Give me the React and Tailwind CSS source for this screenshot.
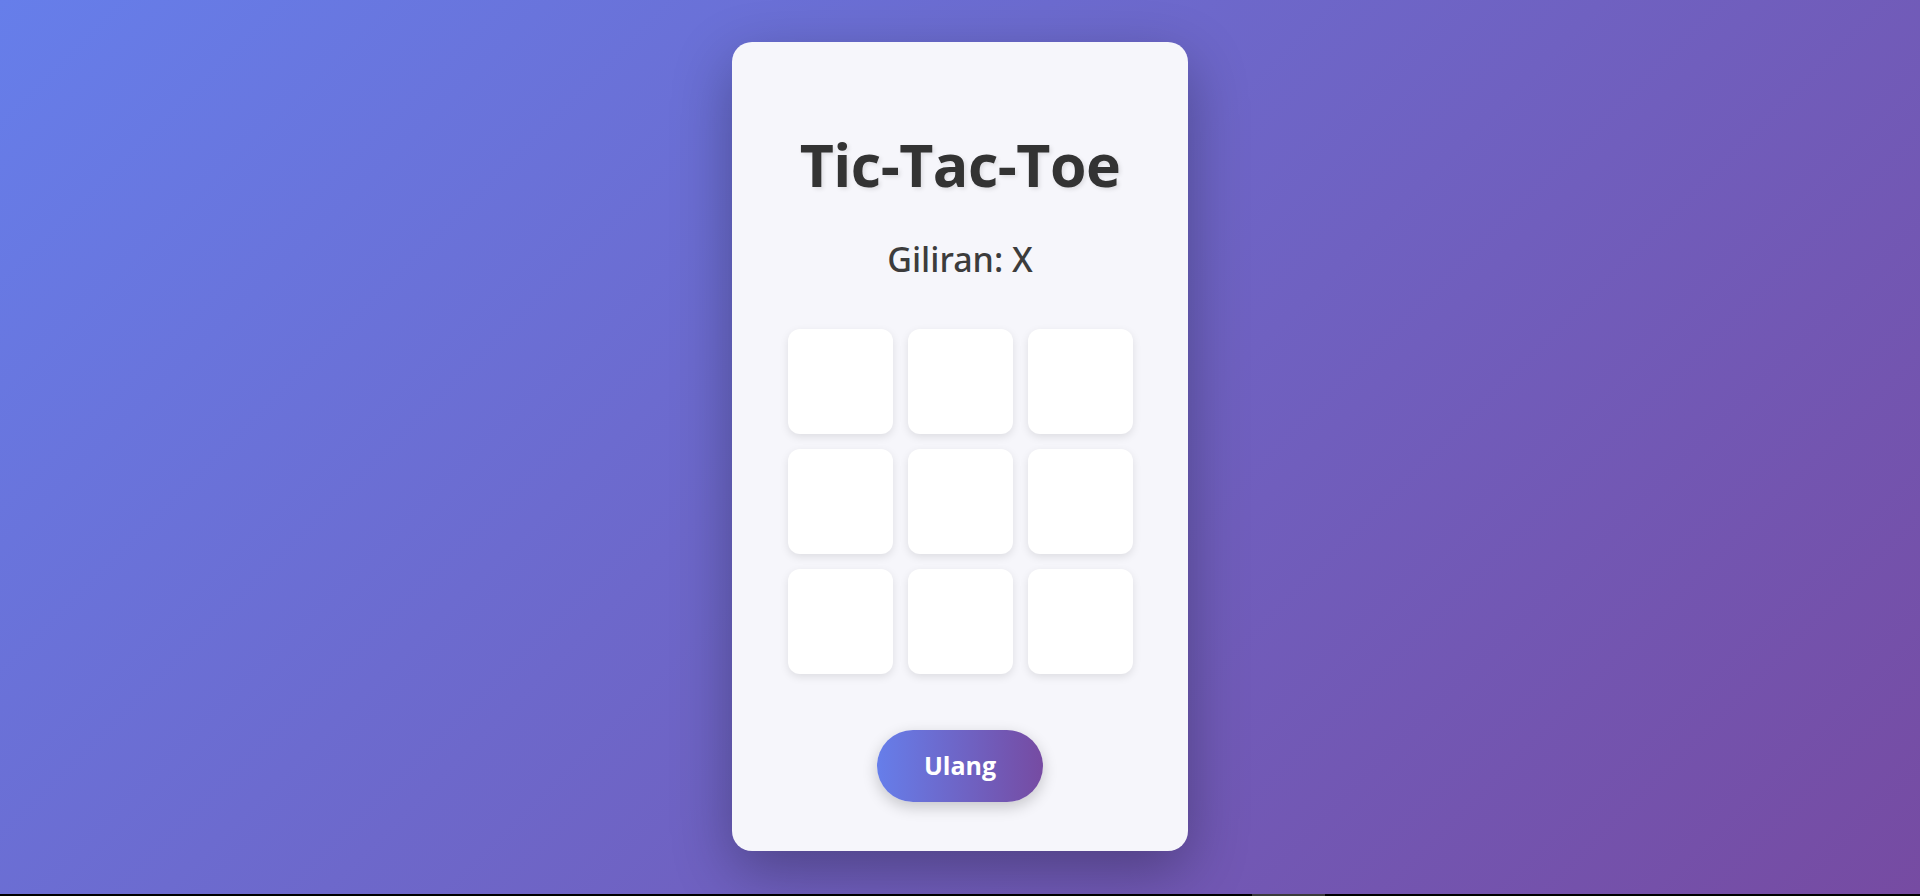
import React from "react";

export default function App() {
  const cells = Array.from({ length: 9 });
  return (
    <div className="w-full" style={{ fontFamily: '"Open Sans", "Noto Sans", sans-serif' }}>
      <div className="h-[894px] w-full flex items-center justify-center bg-[linear-gradient(135deg,#667eea_0%,#764ba2_100%)]">
        <div className="w-[456px] h-[809px] -mt-[1px] rounded-[20px] bg-[#f6f6fb] shadow-[0_20px_60px_rgba(0,0,0,0.3)] flex flex-col items-center pt-[92px]">
          <h1 className="text-[59px] leading-[60px] font-bold tracking-[-0.5px] text-[#333] [text-shadow:2px_2px_4px_rgba(0,0,0,0.1)]">
            Tic-Tac-Toe
          </h1>
          <div
            className="mt-[48px] text-[34px] leading-[35px] font-medium text-[#3c3c3c]"
            style={{ fontFamily: '"Noto Sans", "Open Sans", sans-serif' }}
          >
            Giliran: X
          </div>
          <div className="mt-[52px] grid grid-cols-[repeat(3,105px)] gap-[15px]">
            {cells.map((_, i) => (
              <button
                key={i}
                className="w-[105px] h-[105px] rounded-[12px] bg-white shadow-[0_3px_8px_rgba(0,0,0,0.1)]"
              />
            ))}
          </div>
          <button className="mt-[56px] w-[166px] h-[72px] rounded-full bg-[linear-gradient(90deg,#667eea,#764ba2)] text-white font-bold text-[25px] shadow-[0_5px_15px_rgba(0,0,0,0.2)]">
            Ulang
          </button>
        </div>
      </div>
      <div className="h-[2px] w-full bg-black flex">
        <div className="w-[1252px]" />
        <div className="w-[73px] h-full bg-[#3b3b3b]" />
      </div>
    </div>
  );
}
